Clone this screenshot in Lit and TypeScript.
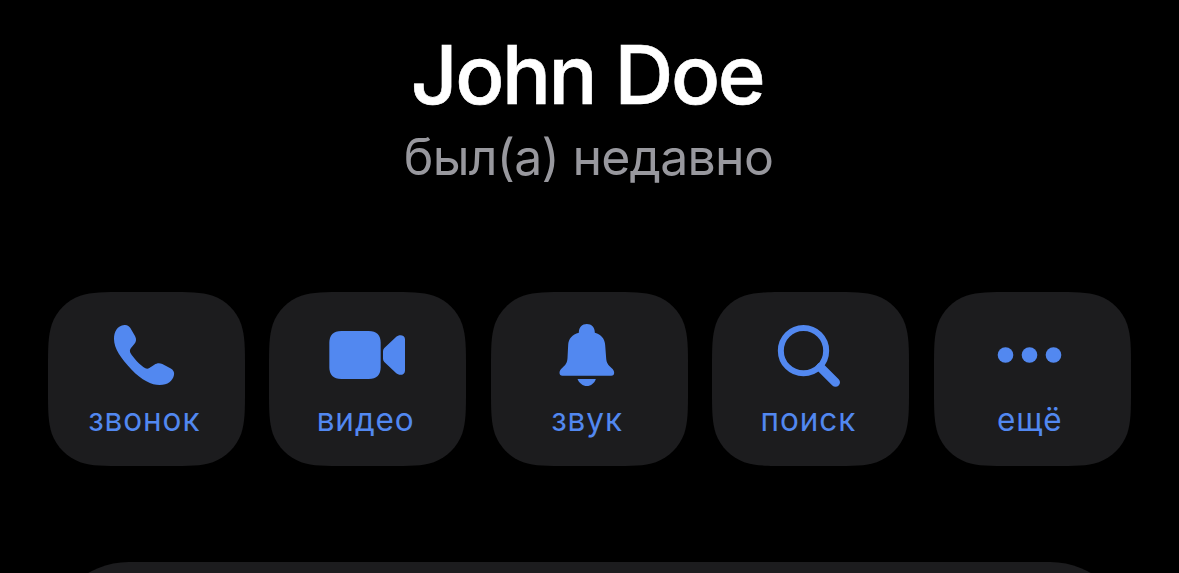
import { LitElement, html, css, svg, SVGTemplateResult } from "lit";
import { customElement, property } from "lit/decorators.js";

interface Action {
  label: string;
  viewBox: string;
  icon: SVGTemplateResult;
}

const actions: Action[] = [
  {
    label: "звонок",
    viewBox: "177 90 288 240",
    icon: svg`<path d="M253 120C262 119 268 124 271 129L285 153C290 162 289 170 283 177L273 189C269 194 269 199 271 203C281 220 300 240 316 250C320 252 324 252 328 249L343 239C350 234 359 233 367 237L391 250C400 255 404 262 402 270C398 288 384 300 359 300C335 300 305 285 275 254C243 221 222 190 222 162C222 140 232 122 253 120Z"/>`,
  },
  {
    label: "видео",
    viewBox: "174 90 288 240",
    icon: svg`<path d="M238 138H320C344 138 356 150 356 174V246C356 270 344 282 320 282H238C214 282 202 270 202 246V174C202 150 214 138 238 138Z"/><path d="M367 189L402 156C411 147 429 149 429 163V257C429 271 411 273 402 264L367 231Q363 227 363 221V199Q363 193 367 189Z"/>`,
  },
  {
    label: "звук",
    viewBox: "171.5 90 288 240",
    icon: svg`<path d="M285 143C285 127 295 117 309 117S333 127 333 143C352 148 363 161 364 180L367 220C368 233 372 240 383 249C388 253 391 258 391 263C391 269 388 272 382 272H236C230 272 227 269 227 263C227 258 230 253 235 249C246 240 250 233 251 220L253 180C254 161 265 148 285 143Z"/><path d="M281 282H336C332 295 321 303 309 303S286 295 281 282Z"/>`,
  },
  {
    label: "поиск",
    viewBox: "174.5 90 288 240",
    icon: svg`<circle cx="296" cy="197" r="68" fill="none" stroke="currentColor" stroke-width="18"/><path d="M347 247L392 292" fill="none" stroke="currentColor" stroke-width="27" stroke-linecap="round"/>`,
  },
  {
    label: "ещё",
    viewBox: "174.5 90 288 240",
    icon: svg`<circle cx="239" cy="210" r="23.5"/><circle cx="311" cy="210" r="23.5"/><circle cx="383" cy="210" r="23.5"/>`,
  },
];

/** Outline of a rounded rectangle with continuous (smoothed) corners. */
function smoothRect(w: number, h: number, r: number): string {
  const [a, b, c, d, e, f, g] = [1.528665, 1.088493, 0.868407, 0.631494, 0.074911, 0.372824, 0.16906].map((k) => k * r);
  return `M${a} 0H${w - a}C${w - b} 0 ${w - c} 0 ${w - d} ${e}C${w - f} ${g} ${w - g} ${f} ${w - e} ${d}C${w} ${c} ${w} ${b} ${w} ${a}
V${h - a}C${w} ${h - b} ${w} ${h - c} ${w - e} ${h - d}C${w - g} ${h - f} ${w - f} ${h - g} ${w - d} ${h - e}C${w - c} ${h} ${w - b} ${h} ${w - a} ${h}
H${a}C${b} ${h} ${c} ${h} ${d} ${h - e}C${f} ${h - g} ${g} ${h - f} ${e} ${h - d}C0 ${h - c} 0 ${h - b} 0 ${h - a}
V${a}C0 ${b} 0 ${c} ${e} ${d}C${g} ${f} ${f} ${g} ${d} ${e}C${c} 0 ${b} 0 ${a} 0Z`;
}

const cardShape = smoothRect(197, 174, 51);

@customElement("action-button")
export class ActionButton extends LitElement {
  @property({ attribute: false }) action!: Action;

  static styles = css`
    :host {
      display: block;
      width: 197px;
      height: 174px;
    }
    .card {
      display: grid;
      width: 197px;
      height: 174px;
    }
    .shape,
    .content {
      grid-area: 1 / 1;
    }
    .shape {
      fill: #1c1c1e;
    }
    .content {
      display: flex;
      flex-direction: column;
      align-items: center;
      padding-top: 23px;
      color: #5288f0;
    }
    .icon {
      display: block;
      width: 96px;
      height: 80px;
      fill: currentColor;
    }
    .label {
      margin-top: 5px;
      padding-right: 4.5px;
      font-size: 31.5px;
      line-height: 40px;
      letter-spacing: 0.9px;
      white-space: nowrap;
    }
  `;

  render() {
    return html`<div class="card" role="button">
      <svg class="shape" width="197" height="174" viewBox="0 0 197 174"><path d=${cardShape} /></svg>
      <div class="content">
        <svg class="icon" viewBox=${this.action.viewBox}>${this.action.icon}</svg>
        <span class="label">${this.action.label}</span>
      </div>
    </div>`;
  }
}

@customElement("app-root")
export class AppRoot extends LitElement {
  static styles = css`
    :host {
      display: flex;
      flex-direction: column;
      box-sizing: border-box;
      height: 573px;
      padding: 25px 48px 0;
      overflow: hidden;
      background: #000;
      font-family: Inter, "Liberation Sans", sans-serif;
    }
    .name {
      margin: 0;
      height: 100px;
      padding-right: 5px;
      font-size: 81.5px;
      font-weight: 500;
      line-height: 100px;
      letter-spacing: -2.4px;
      text-align: center;
      color: #fff;
      -webkit-text-stroke: 0.6px #fff;
    }
    .status {
      height: 64px;
      padding-right: 2px;
      font-size: 50px;
      line-height: 64px;
      letter-spacing: -0.75px;
      text-align: center;
      color: #98989e;
    }
    .actions {
      display: flex;
      gap: 24.4px;
      margin-top: 103px;
    }
    .panel {
      flex: none;
      height: 200px;
      margin-top: 96px;
      border-radius: 81px;
      background: #1c1c1e;
    }
  `;

  render() {
    return html`
      <h1 class="name">John Doe</h1>
      <div class="status">был(а) недавно</div>
      <div class="actions">${actions.map((a) => html`<action-button .action=${a}></action-button>`)}</div>
      <div class="panel"></div>
    `;
  }
}
